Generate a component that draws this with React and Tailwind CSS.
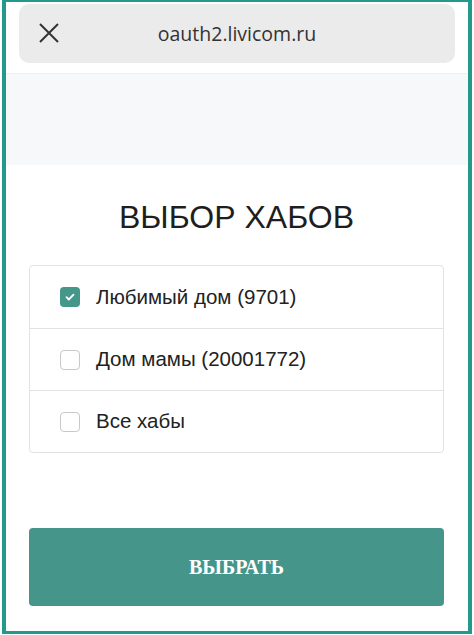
import React, {useState} from "react";

const hubs = [
    {id: 1, name: "Любимый дом (9701)"},
    {id: 2, name: "Дом мамы (20001772)"},
    {id: 3, name: "Все хабы"},
];

function Checkbox({checked}) {
    if (checked) {
        return (
            <span className="flex h-5 w-5 shrink-0 items-center justify-center rounded bg-[#45978a]">
                <svg width="12" height="12" viewBox="0 0 12 12" fill="none">
                    <path d="M2.5 6.2l2.3 2.3 4.7-4.8" stroke="white" strokeWidth="1.8" strokeLinecap="round" strokeLinejoin="round"/>
                </svg>
            </span>
        );
    }

    return <span className="h-5 w-5 shrink-0 rounded border border-[#c9c9c9] bg-white"/>;
}

export default function App() {
    const [selected, setSelected] = useState([1]);

    const toggle = id => {
        setSelected(s => s.includes(id) ? s.filter(x => x !== id) : [...s, id]);
    };

    return (
        <div className="h-[635px] w-[474px] bg-white pl-[2px] pr-[2px] pb-[1px]">
            <div className="flex h-full flex-col border-x-[4px] border-t-[2px] border-b-[3px] border-[#22998a] bg-white">
                <div className="px-[13px] pt-[2px]">
                    <div className="relative flex h-[59px] items-center justify-center rounded-[10px] bg-[#ebebeb]">
                        <svg className="absolute left-[20px] top-[19px]" width="20" height="20" viewBox="0 0 20 20" fill="none">
                            <path d="M1 1l18 18M19 1L1 19" stroke="#333" strokeWidth="2"/>
                        </svg>
                        <span className="font-['Open_Sans'] text-[19.5px] text-[#333]">oauth2.livicom.ru</span>
                    </div>
                </div>
                <div className="mt-[10px] h-[92px] border-t border-[#efeff1] bg-[#f7f8fa]"/>

                <div className="flex flex-1 flex-col pl-[23px] pr-[24px] font-['Liberation_Sans',sans-serif]">
                    <h1 className="mt-[32px] text-center font-['Liberation_Sans',sans-serif] text-[32px] leading-[40px] text-[#1e1e1e]">ВЫБОР ХАБОВ</h1>

                    <div className="mt-[28px] rounded border border-[#e2e2e2]">
                        {hubs.map((hub, i) => (
                            <div key={hub.id}
                                 onClick={() => toggle(hub.id)}
                                 className={"flex h-[62px] cursor-pointer items-center gap-[16px] pl-[30px] " + (i > 0 ? "border-t border-[#e2e2e2]" : "")}>
                                <Checkbox checked={selected.includes(hub.id)}/>
                                <span className="font-['Liberation_Sans',sans-serif] text-[20.5px] text-[#222]">{hub.name}</span>
                            </div>
                        ))}
                    </div>

                    <button type="button"
                            className="mt-[75px] h-[78px] w-full rounded bg-[#46958a] font-['Liberation_Serif',serif] text-[20px] font-bold text-white">
                        ВЫБРАТЬ
                    </button>
                </div>
            </div>
        </div>
    );
}
